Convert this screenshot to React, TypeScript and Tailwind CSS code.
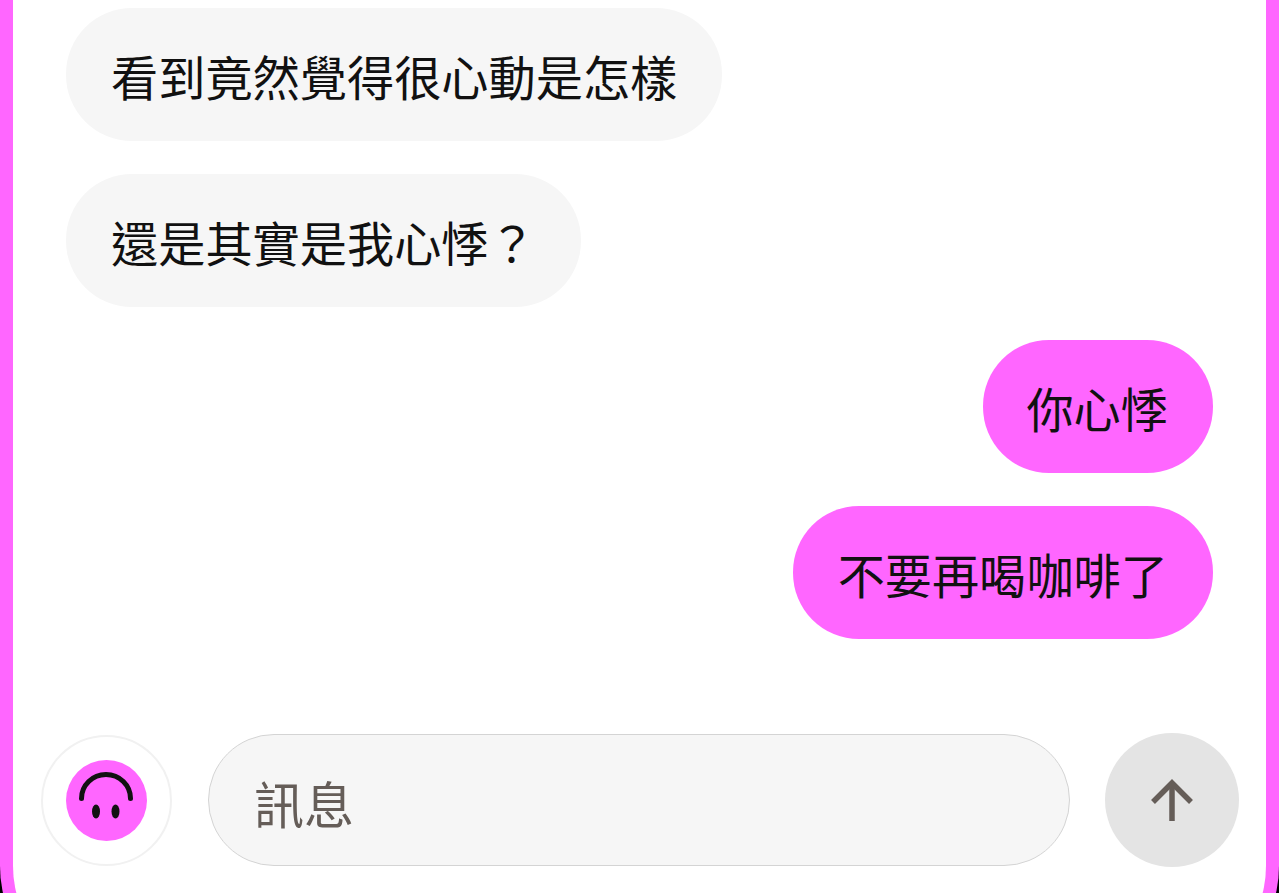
const FONT = "font-['Noto_Sans_CJK_TC','Noto_Sans_CJK_JP',sans-serif]"

const THEIRS = ['看到竟然覺得很心動是怎樣', '還是其實是我心悸？']

function Bubble({ text, mine = false, pad = 'pl-[45px]' }: { text: string; mine?: boolean; pad?: string }) {
  return (
    <div
      className={`flex h-[133px] items-center rounded-[66px] pt-[3px] pr-[45px] text-[47.2px] leading-none text-[#111] ${pad} ${
        mine ? 'self-end bg-[#ff66ff]' : 'self-start bg-[#f6f6f6]'
      }`}
    >
      <span className="whitespace-nowrap">{text}</span>
    </div>
  )
}

function Smiley() {
  return (
    <svg width="81" height="81" viewBox="0 0 81 81">
      <circle cx="40.5" cy="40.5" r="40.5" fill="#ff66ff" />
      <path d="M15.5 38.5 A24.5 24 0 0 1 64.5 38.5" fill="none" stroke="#111" strokeWidth="5" strokeLinecap="round" />
      <ellipse cx="30" cy="51.5" rx="4" ry="7" fill="#111" />
      <ellipse cx="49.5" cy="51.5" rx="4" ry="7" fill="#111" />
    </svg>
  )
}

function ArrowUp() {
  return (
    <svg width="44" height="44" viewBox="0 0 44 44" fill="none" stroke="#655d58" strokeWidth="5.5">
      <path d="M22 43 V6" />
      <path d="M3 24 L22 5 L41 24" />
    </svg>
  )
}

export default function App() {
  return (
    <div className={`h-[893px] w-[1279px] overflow-hidden bg-black ${FONT}`}>
      {/* frame runs past the bottom of the shot, only the start of the corners shows */}
      <div className="flex h-[989px] flex-col rounded-b-[123px] border-x-[13px] border-b-[13px] border-[#ff66ff] bg-white">
        <div className="flex flex-col gap-[33px] pt-[8px] pr-[53px] pl-[53px]">
          {THEIRS.map((t) => (
            <Bubble key={t} text={t} />
          ))}
          <Bubble text="你心悸" mine pad="pl-[43px]" />
          <Bubble text="不要再喝咖啡了" mine />
        </div>

        <div className="mt-[94px] flex items-center pr-[14px] pl-[28px]">
          <div className="flex h-[131px] w-[131px] shrink-0 items-center justify-center rounded-full border-2 border-[#f1f1f1]">
            <Smiley />
          </div>
          <div className="ml-[36px] flex h-[132px] w-[862px] shrink-0 items-center rounded-[66px] border border-[#d4d4d4] bg-[#f6f6f6] pt-[3px] pl-[45px] text-[50px] leading-none text-[#655d58]">
            訊息
          </div>
          <button className="ml-[35px] flex h-[134px] w-[134px] shrink-0 items-center justify-center rounded-full bg-[#e4e4e4]">
            <ArrowUp />
          </button>
        </div>
      </div>
    </div>
  )
}
